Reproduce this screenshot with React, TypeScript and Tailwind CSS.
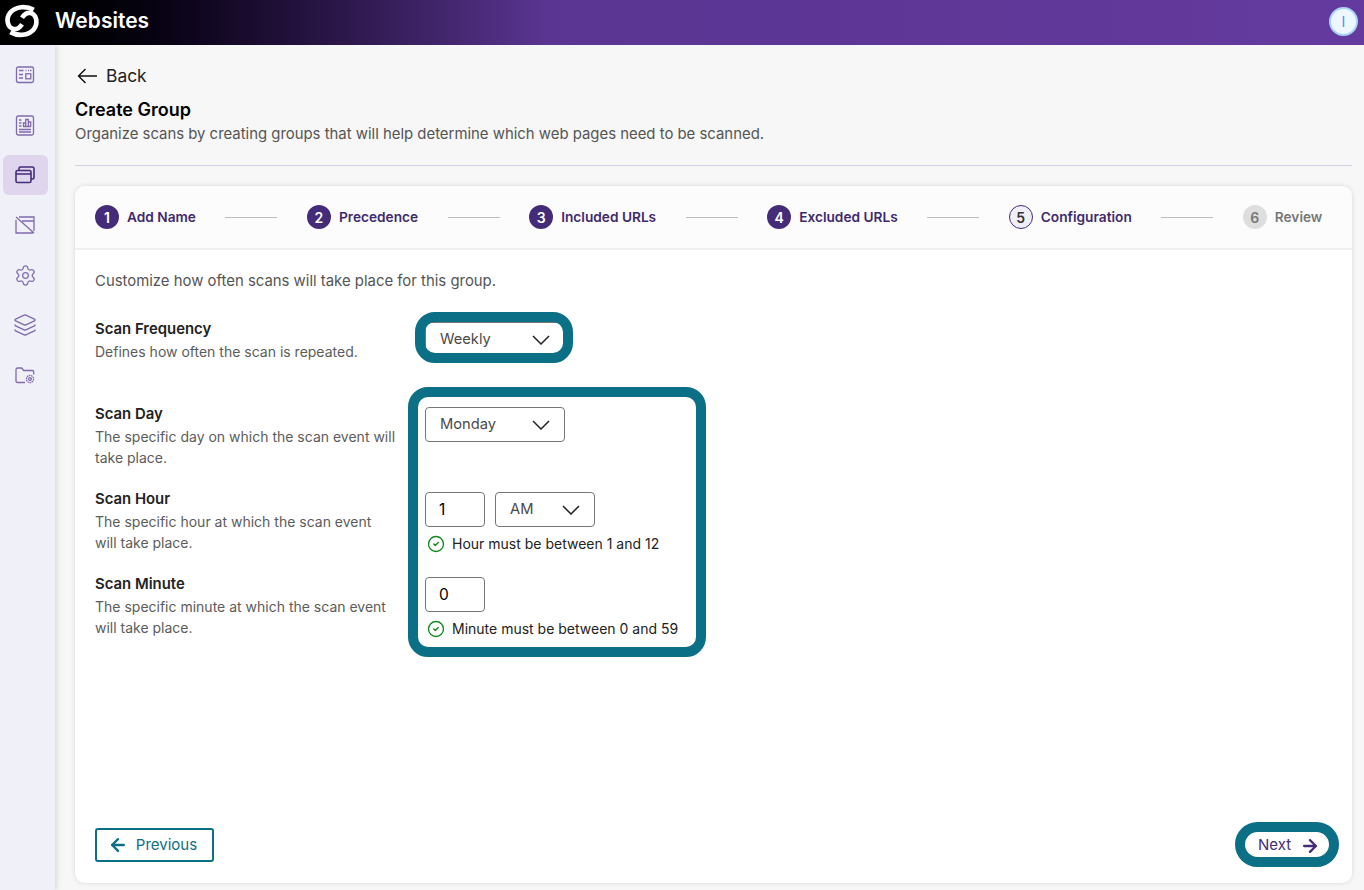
import type { ReactNode } from 'react'
import { ArrowLeft, ArrowRight, CircleCheck, Settings, Layers } from 'lucide-react'

// sidebar icons, drawn to match the screenshot
const IconDashboard = ({ className = '' }: { className?: string }) => (
  <svg viewBox="0 0 20 18" className={className} fill="none" stroke="currentColor" strokeWidth="1.3">
    <rect x="1.5" y="1" width="17" height="15.5" rx="1.8" />
    <path d="M4 4.5h4.5M10.5 4.5h1M13 4.5h1M15 4.5h1.5M4 8.5h4M4 12h4" />
    <rect x="10.8" y="7.8" width="5" height="5" />
  </svg>
)

const IconReport = ({ className = '' }: { className?: string }) => (
  <svg viewBox="0 0 20 21" className={className} fill="none" stroke="currentColor" strokeWidth="1.3">
    <rect x="1.5" y="1" width="17" height="19" rx="1.8" />
    <path d="M4 5h2.5M4 8h2.5M4 11h2.5M4 14.5h12M4 17h12" />
    <path d="M8.5 11.5V8h2.2v3.5M10.7 11.5V4.5h2.6v7M13.3 11.5V7h2.4v4.5M8 11.5h8" />
  </svg>
)

const IconWindows = ({ className = '' }: { className?: string }) => (
  <svg viewBox="0 0 20 18" className={className} fill="none" stroke="currentColor" strokeWidth="1.6">
    <rect x="1" y="4.5" width="15" height="12" rx="1.6" />
    <path d="M1 8h15M4 4.5V2.6C4 1.7 4.7 1 5.6 1h11.8c.9 0 1.6.7 1.6 1.6v8.8c0 .9-.7 1.6-1.6 1.6H16" />
  </svg>
)

const IconNoWindow = ({ className = '' }: { className?: string }) => (
  <svg viewBox="0 0 20 18" className={className} fill="none" stroke="currentColor" strokeWidth="1.3">
    <path d="M1 4v13h17M19 15V1H4M7 5h12M1 1l18 16" />
  </svg>
)

const IconFolderGear = ({ className = '' }: { className?: string }) => (
  <svg viewBox="0 0 20 17" className={className} fill="none" stroke="currentColor" strokeWidth="1.3">
    <path d="M10 15.5H2.5C1.7 15.5 1 14.8 1 14V2.5C1 1.7 1.7 1 2.5 1h4.2l2 2.5h8.5c.8 0 1.5.7 1.5 1.5v2.5" />
    <circle cx="15" cy="12" r="3.6" strokeDasharray="1.6 0.6" />
    <circle cx="15" cy="12" r="1.4" />
  </svg>
)

const Logo = () => (
  <svg viewBox="0 0 34 32" className="w-[36px] h-[34px] mb-[3px]" fill="none" stroke="#fff" strokeWidth="4.4">
    <path d="M28 5.5C21 1.5 11 2 6 8c-4.500 5.500-3 14 3 15.500 3.500.8 6-1.500 8-4.500" />
    <path d="M6 26.500c7 4 17 3.500 22-2.500 4.500-5.500 3-14-3-15.500-3.500-.8-6 1.500-8 4.500" />
  </svg>
)

const Chevron = () => (
  <svg viewBox="0 0 18 10" className="w-[18px] h-[10px] text-[#222]" fill="none" stroke="currentColor" strokeWidth="1.5">
    <path d="M1 1l8 8 8-8" />
  </svg>
)

const navItems = [
  { Icon: IconDashboard, size: 'w-5 h-[18px]' },
  { Icon: IconReport, size: 'w-5 h-[21px]' },
  { Icon: IconWindows, size: 'w-5 h-[18px]', active: true },
  { Icon: IconNoWindow, size: 'w-5 h-[18px]' },
  { Icon: Settings, size: 'w-[23px] h-[23px]' },
  { Icon: Layers, size: 'w-[24px] h-[24px]' },
  { Icon: IconFolderGear, size: 'w-5 h-[17px]' },
]

const steps = [
  { n: 1, label: 'Add Name', state: 'done' },
  { n: 2, label: 'Precedence', state: 'done' },
  { n: 3, label: 'Included URLs', state: 'done' },
  { n: 4, label: 'Excluded URLs', state: 'done' },
  { n: 5, label: 'Configuration', state: 'current' },
  { n: 6, label: 'Review', state: 'todo' },
]

const Select = ({ value, width }: { value: string; width: string }) => (
  <div className={`${width} h-[35px] border border-[#777] rounded-[4px] bg-white flex items-center justify-between pl-[14px] pr-[14px] text-[14.7px] text-[#4a4a4a]`}>
    <span>{value}</span>
    <Chevron />
  </div>
)

const TextBox = ({ value }: { value: string }) => (
  <div className="w-[60px] h-[35px] border border-[#777] rounded-[4px] bg-white flex items-center pl-[13px] text-[15.5px] text-black">
    {value}
  </div>
)

const Hint = ({ text }: { text: string }) => (
  <div className="flex items-center gap-[7px] mt-[8px] ml-[2px] text-[14px] leading-[18px] text-[#222]">
    <CircleCheck className="w-[18px] h-[18px] text-[#128a22]" strokeWidth={1.8} />
    <span>{text}</span>
  </div>
)

const Field = ({ title, desc, children }: { title: string; desc: string; children: ReactNode }) => (
  <div className="flex h-[85px]">
    <div className="w-[330px] shrink-0">
      <div className="text-[14.9px] leading-5 font-semibold text-[#222]">{title}</div>
      <div className="mt-[2px] text-[14px] leading-[21px] text-[#5c5c5c] whitespace-pre-line">{desc}</div>
    </div>
    <div className="pt-[3px]">{children}</div>
  </div>
)

export default function App() {
  return (
    <div className="h-screen w-full overflow-hidden flex flex-col bg-[#f7f7f7] font-['Inter',sans-serif]">
      <header className="h-[45px] shrink-0 flex items-center bg-gradient-to-r from-black via-[#5a3591] via-40% to-[#643a9e] pl-[4px] pr-[6px]">
        <Logo />
        <span className="ml-[15px] mb-[3px] text-[21px] font-semibold text-white">Websites</span>
        <div className="ml-auto mb-[3px] w-[29px] h-[29px] rounded-full bg-[#eef6ff] border-2 border-[#a9d2f7] flex items-center justify-center text-[14px] text-[#3b9bf0]">
          I
        </div>
      </header>

      <div className="flex flex-1 min-h-0">
        <aside className="w-[55px] shrink-0 bg-[#f0f0f8] shadow-[2px_0_5px_rgba(0,0,0,0.12)] flex flex-col pt-[10px] pl-[3px]">
          {navItems.map(({ Icon, size, active }, i) => (
            <div
              key={i}
              className={`w-[45px] h-[40px] mb-[10px] pr-px rounded-[6px] flex items-center justify-center ${active ? 'bg-[#dfd5ec] text-[#452c78]' : 'text-[#8069ad]'}`}
            >
              <Icon className={size} strokeWidth={1.3} />
            </div>
          ))}
        </aside>

        <main className="flex-1 min-w-0 pl-[20px] pr-[12px] pb-[7px] flex flex-col">
          <div className="flex items-center gap-[8px] mt-[20px] ml-[2px] h-[22px] text-[17.4px] text-[#222]">
            <svg viewBox="0 0 21 16" className="w-[21px] h-[16px] text-[#111]" fill="none" stroke="currentColor" strokeWidth="1.4">
              <path d="M20 8H1.5M8.5 1l-7 7 7 7" />
            </svg>
            <span>Back</span>
          </div>
          <h1 className="mt-[11px] text-[18px] leading-[24px] font-semibold text-black">Create Group</h1>
          <p className="mt-[1px] text-[14.9px] leading-[22px] text-[#555]">
            Organize scans by creating groups that will help determine which web pages need to be scanned.
          </p>
          <div className="mt-[20px] h-px bg-[#d5d0e4]" />

          <section className="mt-[20px] flex-1 min-h-0 bg-white rounded-[10px] shadow-[0_0_5px_rgba(0,0,0,0.13)] flex flex-col">
            <div className="h-[64px] shrink-0 flex items-center gap-[29.5px] px-[20px] bg-[#fcfcfc] border-b-2 border-[#efefef] rounded-t-[10px]">
              {steps.map((s, i) => (
                <div key={s.n} className="contents">
                  {i > 0 && <div className="w-[52px] h-px bg-[#bdbdbd]" />}
                  <div className="flex items-center gap-[8px]">
                    <div
                      className={`w-[24px] h-[24px] rounded-full flex items-center justify-center text-[14px] font-semibold ${
                        s.state === 'done'
                          ? 'bg-[#452c78] text-white'
                          : s.state === 'current'
                            ? 'bg-[#f1eef8] border border-[#452c78] text-[#333] font-normal'
                            : 'bg-[#dedede] text-[#777]'
                      }`}
                    >
                      {s.n}
                    </div>
                    <span className={`text-[13.7px] font-semibold ${s.state === 'todo' ? 'text-[#777]' : 'text-[#3f2a6e]'}`}>{s.label}</span>
                  </div>
                </div>
              ))}
            </div>

            <div className="flex-1 min-h-0 flex flex-col px-[20px] pt-[20px] pb-[21px]">
              <p className="text-[14.9px] leading-[22px] text-[#555]">Customize how often scans will take place for this group.</p>

              <div className="mt-[27px]">
                <Field title="Scan Frequency" desc="Defines how often the scan is repeated.">
                  <div className="relative">
                    <Select value="Weekly" width="w-[140px]" />
                    <div className="absolute -left-[10px] -top-[10px] w-[158px] h-[51px] border-[10px] border-[#0b7086] rounded-[20px] pointer-events-none" />
                  </div>
                </Field>
                <div className="relative">
                  <Field title="Scan Day" desc={'The specific day on which the scan event will\ntake place.'}>
                    <Select value="Monday" width="w-[140px]" />
                  </Field>
                  <Field title="Scan Hour" desc={'The specific hour at which the scan event\nwill take place.'}>
                    <div className="flex gap-[10px]">
                      <TextBox value="1" />
                      <Select value="AM" width="w-[100px]" />
                    </div>
                    <Hint text="Hour must be between 1 and 12" />
                  </Field>
                  <Field title="Scan Minute" desc={'The specific minute at which the scan event\nwill take place.'}>
                    <TextBox value="0" />
                    <Hint text="Minute must be between 0 and 59" />
                  </Field>
                  <div className="absolute left-[313px] -top-[17px] w-[298px] h-[270px] border-[10px] border-[#0b7086] rounded-[20px] pointer-events-none" />
                </div>
              </div>

              <div className="mt-auto flex items-start justify-between">
                <button className="w-[119px] h-[34px] pr-[4px] border-2 border-[#0b7086] rounded-[3px] flex items-center justify-center gap-[8px] text-[15px] text-[#0b7086]">
                  <ArrowLeft className="w-[20px] h-[20px]" strokeWidth={2.8} />
                  Previous
                </button>
                <button className="w-[104px] h-[45px] -mt-[6px] -mb-[5px] -mr-[7px] pl-[4px] pt-[2px] border-[10px] border-[#0b7086] rounded-full bg-white flex items-center justify-center gap-[9px] text-[15px] text-[#452c78]">
                  Next
                  <ArrowRight className="w-[20px] h-[20px]" strokeWidth={2.8} />
                </button>
              </div>
            </div>
          </section>
        </main>
      </div>
    </div>
  )
}
